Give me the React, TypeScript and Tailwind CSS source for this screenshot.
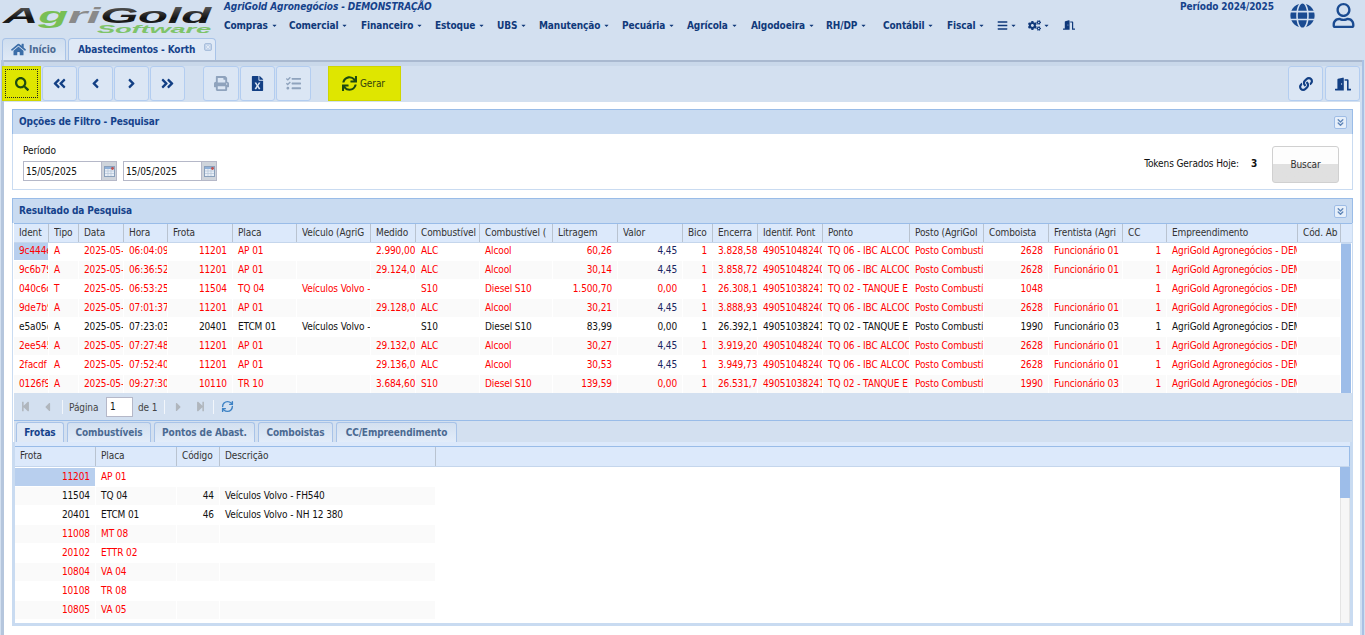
import React from "react";
import {
  FaHome, FaSearch, FaAngleDoubleLeft, FaAngleLeft, FaAngleRight, FaAngleDoubleRight,
  FaPrint, FaFileExcel, FaTasks, FaSync, FaLink, FaDoorOpen, FaGlobe, FaRegUser, FaCogs, FaBars, FaCaretDown,
  FaStepBackward, FaStepForward, FaCaretLeft, FaCaretRight,
} from "react-icons/fa";
import { ChevronsDown, RefreshCw, X } from "lucide-react";

const FONT = "font-['DejaVu_Sans_Condensed','DejaVu_Sans',sans-serif]";
const MAIN_COLS = "grid grid-cols-[35px_30px_45px_44px_65px_64px_74px_45px_64px_73px_65px_65px_30px_45px_65px_87px_74px_65px_74px_44px_131px_43px]";
const SUB_COLS = "grid grid-cols-[81px_81px_43px_216px]";

const MENUS: [string, string][] = [
  ["Compras", "w-[65px]"], ["Comercial", "w-[72px]"], ["Financeiro", "w-[74px]"], ["Estoque", "w-[62px]"],
  ["UBS", "w-[42px]"], ["Manutenção", "w-[83px]"], ["Pecuária", "w-[65px]"], ["Agrícola", "w-[64px]"],
  ["Algodoeira", "w-[75px]"], ["RH/DP", "w-[57px]"], ["Contábil", "w-[64px]"], ["Fiscal", "w-[50px]"],
];

const HEADERS = ["Ident", "Tipo", "Data", "Hora", "Frota", "Placa", "Veículo (AgriG", "Medido", "Combustível", "Combustível (", "Litragem", "Valor", "Bico", "Encerra", "Identif. Pont", "Ponto", "Posto (AgriGol", "Comboista", "Frentista (Agri", "CC", "Empreendimento", "Cód. Ab"];
const RIGHT = new Set([4, 7, 10, 11, 12, 13, 17, 19]);

const ALC = ["ALC", "Alcool"];
const S10 = ["S10", "Diesel S10"];
const IBC = ["49051048240", "TQ 06 - IBC ALCOO"];
const TQ2 = ["49051038241", "TQ 02 - TANQUE E"];
const POSTO = "Posto Combustí";
const EMP = "AgriGold Agronegócios - DEM";

type Row = { cells: string[]; black?: boolean; darkValue?: boolean };
const row = (id: string, t: string, h: string, fr: string, pl: string, v: string, med: string, c: string[], lit: string, val: string, enc: string, pt: string[], comb: string, fren: string): string[] =>
  [id, t, "2025-05-", h, fr, pl, v, med, c[0], c[1], lit, val, "1", enc, pt[0], pt[1], POSTO, comb, fren, "1", EMP, ""];

const ROWS: Row[] = [
  { darkValue: true, cells: row("9c444e", "A", "06:04:09", "11201", "AP 01", "", "2.990,00", ALC, "60,26", "4,45", "3.828,58", IBC, "2628", "Funcionário 01") },
  { darkValue: true, cells: row("9c6b79", "A", "06:36:52", "11201", "AP 01", "", "29.124,0", ALC, "30,14", "4,45", "3.858,72", IBC, "2628", "Funcionário 01") },
  { cells: row("040c6c", "T", "06:53:25", "11504", "TQ 04", "Veículos Volvo -", "", S10, "1.500,70", "0,00", "26.308,1", TQ2, "1048", "") },
  { darkValue: true, cells: row("9de7b9", "A", "07:01:37", "11201", "AP 01", "", "29.128,0", ALC, "30,21", "4,45", "3.888,93", IBC, "2628", "Funcionário 01") },
  { black: true, cells: row("e5a05c", "A", "07:23:03", "20401", "ETCM 01", "Veículos Volvo -", "", S10, "83,99", "0,00", "26.392,1", TQ2, "1990", "Funcionário 03") },
  { darkValue: true, cells: row("2ee545", "A", "07:27:48", "11201", "AP 01", "", "29.132,0", ALC, "30,27", "4,45", "3.919,20", IBC, "2628", "Funcionário 01") },
  { darkValue: true, cells: row("2facdf", "A", "07:52:40", "11201", "AP 01", "", "29.136,0", ALC, "30,53", "4,45", "3.949,73", IBC, "2628", "Funcionário 01") },
  { cells: row("0126f9", "A", "09:27:30", "10110", "TR 10", "", "3.684,60", S10, "139,59", "0,00", "26.531,7", TQ2, "1990", "Funcionário 03") },
];

const SUB_ROWS: { c: string[]; black?: boolean }[] = [
  { c: ["11201", "AP 01", "", ""] },
  { c: ["11504", "TQ 04", "44", "Veículos Volvo - FH540"], black: true },
  { c: ["20401", "ETCM 01", "46", "Veículos Volvo - NH 12 380"], black: true },
  { c: ["11008", "MT 08", "", ""] },
  { c: ["20102", "ETTR 02", "", ""] },
  { c: ["10804", "VA 04", "", ""] },
  { c: ["10108", "TR 08", "", ""] },
  { c: ["10805", "VA 05", "", ""] },
];

function Logo() {
  return (
    <svg width="216" height="37" viewBox="0 0 216 37" className="block">
      <defs>
        <linearGradient id="gold" x1="0" y1="0" x2="0" y2="1">
          <stop offset="0" stopColor="#666" />
          <stop offset="0.6" stopColor="#111" />
          <stop offset="1" stopColor="#333" />
        </linearGradient>
      </defs>
      <text x="3" y="23" fontFamily="'Liberation Sans',sans-serif" fontWeight="700" fontStyle="italic" fontSize="21.5" textLength="208" lengthAdjust="spacingAndGlyphs" fill="url(#gold)">
        A<tspan fill="#78bf55">g</tspan><tspan fill="#8a8a8a">ri</tspan>Gold
      </text>
      <text x="97" y="33" fontFamily="'Liberation Sans',sans-serif" fontWeight="700" fontStyle="italic" fontSize="11.5" textLength="114" lengthAdjust="spacingAndGlyphs" fill="#7fc46a">
        Software
      </text>
    </svg>
  );
}

function Caret() {
  return <FaCaretDown className="inline-block ml-[3px] text-[7px] align-[0px]" />;
}

function Header() {
  return (
    <div className="flex h-[38px] shrink-0">
      <div className="w-[224px] shrink-0"><Logo /></div>
      <div className="flex flex-col w-[900px] shrink-0">
        <div className="h-[13px] text-[10px] leading-[13px] italic font-bold text-[#15428b] whitespace-nowrap">AgriGold Agronegócios - DEMONSTRAÇÃO</div>
        <div className="flex h-[25px] items-center pb-[1px] text-[10px] font-bold text-[#10397a] whitespace-nowrap">
          {MENUS.map(([m, w]) => (
            <div key={m} className={w}>{m}<Caret /></div>
          ))}
          <div className="w-[31px] flex items-center"><FaBars className="text-[11px]" /><FaCaretDown className="text-[7px] ml-[2px]" /></div>
          <div className="w-[35px] flex items-center"><FaCogs className="text-[13px]" /><FaCaretDown className="text-[7px] ml-[2px]" /></div>
          <div className="flex items-center"><FaDoorOpen className="text-[12px]" /></div>
        </div>
      </div>
      <div className="flex-1 pl-[56px] text-[10px] font-bold text-[#15428b] whitespace-nowrap leading-[13px]">Período 2024/2025</div>
      <div className="flex items-start pt-[3px] pr-[9px] gap-[16px] text-[#1a4b91]">
        <FaGlobe className="text-[25px]" />
        <FaRegUser className="text-[25px]" />
      </div>
    </div>
  );
}

function TopTabs() {
  return (
    <div className="flex h-[22px] shrink-0 pl-[2px] gap-[2px] text-[10px] font-bold">
      <div className="w-[64px] border border-b-0 border-[#a8c3e8] rounded-t-[4px] bg-gradient-to-b from-[#cfdeef] to-[#dfe9f6] flex items-center pb-[1px] pl-[8px] gap-[3px] text-[#4b6a92]">
        <FaHome className="text-[15px] text-[#3c6ea8]" /><span>Início</span>
      </div>
      <div className="relative w-[148px] border border-b-0 border-[#a8c3e8] rounded-t-[4px] bg-[#dfe9f6] flex items-center pb-[1px] pl-[9px] text-[#15428b] whitespace-nowrap">
        Abastecimentos - Korth
        <span className="absolute right-[3px] top-[4px] w-[8px] h-[8px] rounded-[2px] bg-[#c4d4ea] border border-[#a9bfdc] flex items-center justify-center"><X size={6} strokeWidth={3} className="text-[#eef3fa]" /></span>
      </div>
    </div>
  );
}

function ToolBtn({ children, className = "w-[35px]" }: { children: React.ReactNode; className?: string }) {
  return <div className={`h-[35px] shrink-0 rounded-[3px] border border-[#b3cdf0] bg-[#dbe6f4] flex items-center justify-center ${className}`}>{children}</div>;
}

function Toolbar() {
  return (
    <div className="h-[42px] shrink-0 border-t-2 border-[#a9b9d0] bg-[#d3e0f0]">
      <div className="h-[4px] bg-[#c9d8ea]" />
      <div className="flex items-start h-[36px] pr-[2px] text-[#123f84]">
        <div className="w-[39px] h-[35px] -ml-[2px] bg-[#dfe600] border border-[#cfd600] p-[2px] shrink-0">
          <div className="w-full h-full border border-dotted border-[#222] flex items-center justify-center text-[#1d4a10]"><FaSearch className="text-[14px]" /></div>
        </div>
        <div className="flex gap-[1px] ml-[1px]">
          <ToolBtn><FaAngleDoubleLeft className="text-[15px]" /></ToolBtn>
          <ToolBtn><FaAngleLeft className="text-[15px]" /></ToolBtn>
          <ToolBtn><FaAngleRight className="text-[15px]" /></ToolBtn>
          <ToolBtn><FaAngleDoubleRight className="text-[15px]" /></ToolBtn>
        </div>
        <div className="flex gap-[1px] ml-[18px]">
          <ToolBtn className="w-[36px]"><FaPrint className="text-[15px] text-[#8fa3bd]" /></ToolBtn>
          <ToolBtn className="w-[35px]"><FaFileExcel className="text-[15px] text-[#123f84]" /></ToolBtn>
          <ToolBtn className="w-[35px]"><FaTasks className="text-[15px] text-[#8fa3bd]" /></ToolBtn>
        </div>
        <div className="w-[73px] h-[35px] ml-[17px] bg-[#dfe600] border border-[#cfd600] flex items-center pl-[13px] gap-[3px] text-[10px] text-[#34420f] shrink-0">
          <FaSync className="text-[15px] text-[#1d4a10]" /><span>Gerar</span>
        </div>
        <div className="ml-auto flex gap-[2px]">
          <ToolBtn><FaLink className="text-[14px]" /></ToolBtn>
          <ToolBtn><FaDoorOpen className="text-[16px]" /></ToolBtn>
        </div>
      </div>
    </div>
  );
}

function PanelTitle({ title }: { title: string }) {
  return (
    <div className="h-[25px] shrink-0 border-t border-[#99bce8] border-x bg-[#c9dbf1] flex items-center justify-between pl-[6px] pr-[5px] text-[10px] font-bold text-[#15428b]">
      <span className="-mt-[2px]">{title}</span>
      <span className="w-[13px] h-[13px] rounded-[2px] bg-[#e6effa] border border-[#9fbde6] flex items-center justify-center"><ChevronsDown size={11} strokeWidth={3} className="text-[#5f86b8]" /></span>
    </div>
  );
}

function DateField({ value }: { value: string }) {
  return (
    <div className="flex h-[20px] w-[94px] border border-[#b5b8c8]">
      <div className="flex-1 bg-white pl-[2px] text-[10px] leading-[19px] text-[#111]">{value}</div>
      <div className="w-[15px] bg-[#cfd4db] border-l border-[#b5b8c8] flex items-center justify-center">
        <svg width="11" height="11" viewBox="0 0 11 11">
          <rect x="0.5" y="0.5" width="10" height="10" fill="#e8eef6" stroke="#8aa0bb" />
          <rect x="1" y="1" width="9" height="2" fill="#8fb0d8" />
          <path d="M1 5h9M1 7.5h9M4 3v7M7 3v7" stroke="#b4c4d8" strokeWidth="0.7" />
          <circle cx="8.5" cy="2.5" r="1.4" fill="#c0504d" />
        </svg>
      </div>
    </div>
  );
}

function FilterPanel() {
  return (
    <div className="h-[81px] shrink-0 flex flex-col">
      <PanelTitle title="Opções de Filtro - Pesquisar" />
      <div className="flex-1 bg-white border border-t-0 border-[#c9dbf1] flex text-[10px] text-[#111]">
        <div className="pl-[10px] pt-[10px]">
          <div className="h-[17px] leading-[14px]">Período</div>
          <div className="flex gap-[6px]"><DateField value="15/05/2025" /><DateField value="15/05/2025" /></div>
        </div>
        <div className="ml-auto flex items-start pt-[12px] pr-[13px]">
          <div className="pt-[11px] leading-[14px]">Tokens Gerados Hoje:</div>
          <div className="pt-[11px] leading-[14px] font-bold w-[33px] text-left pl-[12px]">3</div>
          <div className="w-[67px] h-[37px] rounded-[3px] border border-[#d0d0d0] bg-gradient-to-b from-[#fdfdfd] from-50% to-[#e0e0e0] to-50% flex items-center justify-center text-[10px] text-[#333]">Buscar</div>
        </div>
      </div>
    </div>
  );
}

function MainGrid() {
  return (
    <div className="flex flex-col text-[10px]">
      <div className="flex h-[20px] shrink-0 border-t border-[#99bce8] bg-[#dce9fb] border-b border-b-[#c5d6ec]">
        <div className={MAIN_COLS}>
          {HEADERS.map((h) => (
            <div key={h} className="border-r border-[#b9c3d0] pl-[5px] pr-[2px] leading-[17px] text-[#333]">
              <div className="overflow-hidden whitespace-nowrap">{h}</div>
            </div>
          ))}
        </div>
        <div className="flex-1" />
      </div>
      <div className="flex h-[150px]">
        <div className="w-[1327px] shrink-0">
          {ROWS.map((r, i) => (
            <div key={i} className={`${MAIN_COLS} ${i === 0 ? "h-[18px]" : "h-[19px]"} ${i % 2 ? "bg-[#fafafa]" : "bg-white"} border-b border-white`}>
              {r.cells.map((c, j) => {
                const color = r.black ? "text-[#111]" : j === 11 && r.darkValue ? "text-[#1b2560]" : "text-[#ff0000]";
                const sel = i === 0 && j === 0 ? "bg-[#b8cfee]" : "";
                return (
                  <div key={j} className={`overflow-hidden whitespace-nowrap border-r border-white pl-[5px] pr-[5px] ${i === 0 ? "leading-[16px]" : "leading-[17px]"} ${RIGHT.has(j) ? "text-right" : "text-left"} ${color} ${sel}`}>{c}</div>
                );
              })}
            </div>
          ))}
        </div>
        <div className="w-[10px] bg-[#9dbde9] border-t border-[#c9dbf1]" />
      </div>
    </div>
  );
}

function PagerIcon({ children, className }: { children: React.ReactNode; className: string }) {
  return <span className={`text-[#b0b6bd] flex items-center justify-center ${className}`}>{children}</span>;
}

function Pager() {
  return (
    <div className="h-[28px] shrink-0 bg-[#d3e0f0] border-b border-[#99bce8] flex items-center pl-[6px] text-[10px] text-[#444]">
      <PagerIcon className="w-[11px]"><FaStepBackward className="text-[11px]" /></PagerIcon>
      <PagerIcon className="w-[9px] ml-[12px]"><FaCaretLeft className="text-[14px]" /></PagerIcon>
      <span className="w-[1px] h-[14px] bg-[#f2f6fb] ml-[10px] mr-[6px]" />
      <span className="w-[37px] pt-[1px]">Página</span>
      <div className="w-[27px] h-[20px] bg-white border border-[#b5b8c8] pl-[3px] leading-[18px] text-[#111]">1</div>
      <span className="w-[20px] ml-[5px] pt-[1px] whitespace-nowrap">de 1</span>
      <span className="w-[1px] h-[14px] bg-[#f2f6fb] ml-[6px] mr-[9px]" />
      <PagerIcon className="w-[9px]"><FaCaretRight className="text-[14px]" /></PagerIcon>
      <PagerIcon className="w-[11px] ml-[12px]"><FaStepForward className="text-[11px]" /></PagerIcon>
      <span className="w-[1px] h-[14px] bg-[#f2f6fb] ml-[7px] mr-[7px]" />
      <RefreshCw size={13} strokeWidth={2.6} className="text-[#3e82c4]" />
    </div>
  );
}

function BottomTabs() {
  const tabs: [string, string][] = [["Frotas", "w-[48px]"], ["Combustíveis", "w-[84px]"], ["Pontos de Abast.", "w-[101px]"], ["Comboistas", "w-[75px]"], ["CC/Empreendimento", "w-[121px]"]];
  return (
    <div className="h-[21px] shrink-0 bg-[#d3e0f0] flex items-end pl-[2px] gap-[3px] text-[10px] font-bold">
      {tabs.map(([t, w], i) => (
        <div key={t} className={`${w} h-[20px] border border-b-0 border-[#a8c3e8] rounded-t-[3px] flex items-center justify-center whitespace-nowrap ${i === 0 ? "bg-[#dfe9f6] text-[#15428b]" : "bg-gradient-to-b from-[#d3e0f0] to-[#e2ecf9] text-[#4b6a92]"}`}>{t}</div>
      ))}
    </div>
  );
}

function SubGrid() {
  return (
    <div className="flex-1 flex flex-col min-h-0 -ml-[2px] text-[10px] border-l-[3px] border-r-2 border-b-[3px] border-[#c9dbf1]">
      <div className="h-[4px] shrink-0 bg-[#dce9fb]" />
      <div className="h-[21px] shrink-0 flex bg-[#dce9fb] border border-l-0 border-t-[#99bce8] border-r-[#99bce8] border-b-[#c5d6ec]">
        <div className={SUB_COLS}>
          {["Frota", "Placa", "Código", "Descrição"].map((h) => (
            <div key={h} className="border-r border-[#b9c3d0] pl-[5px] leading-[18px] text-[#333] overflow-hidden whitespace-nowrap">{h}</div>
          ))}
        </div>
      </div>
      <div className="flex-1 flex min-h-0 pt-[1px] bg-white">
        <div className="flex-1">
          {SUB_ROWS.map((r, i) => (
            <div key={i} className={`${SUB_COLS} w-[421px] h-[19px] border-b border-white ${i % 2 ? "bg-[#fafafa]" : "bg-white"}`}>
              {r.c.map((c, j) => (
                <div key={j} className={`border-r border-white pl-[5px] pr-[5px] leading-[17px] overflow-hidden whitespace-nowrap ${j === 0 || j === 2 ? "text-right" : "text-left"} ${r.black ? "text-[#111]" : "text-[#ff0000]"} ${i === 0 && j === 0 ? "bg-[#b8cfee]" : ""}`}>{c}</div>
              ))}
            </div>
          ))}
        </div>
        <div className="w-[10px] -mt-[1px] flex flex-col bg-[#f6f6f6] border-x border-[#e4e4e4]">
          <div className="h-[31px] bg-[#9dbde9] -mx-[1px]" />
        </div>
      </div>
    </div>
  );
}

function ResultPanel() {
  return (
    <div className="flex-1 flex flex-col min-h-0 mt-[8px]">
      <PanelTitle title="Resultado da Pesquisa" />
      <div className="flex-1 min-h-0 flex flex-col pl-[1px] border-x border-[#c9dbf1]">
        <MainGrid />
        <Pager />
        <BottomTabs />
        <SubGrid />
      </div>
    </div>
  );
}

export default function App() {
  return (
    <div className={`${FONT} tracking-[-0.1px] w-[1365px] h-[635px] overflow-hidden bg-[#d3e0f0] flex flex-col`}>
      <Header />
      <TopTabs />
      <div className="flex-1 min-h-0 flex flex-col bg-white border-l-[3px] border-[#b5c6dd] ml-[1px] border-r-[2px] border-r-[#a9c1e4] mr-[1px]">
        <Toolbar />
        <div className="flex-1 min-h-0 flex flex-col bg-white pl-[8px] pr-[7px] pt-[7px] pb-[9px] border-r-2 border-[#cfdff2]">
          <FilterPanel />
          <ResultPanel />
        </div>
      </div>
    </div>
  );
}
